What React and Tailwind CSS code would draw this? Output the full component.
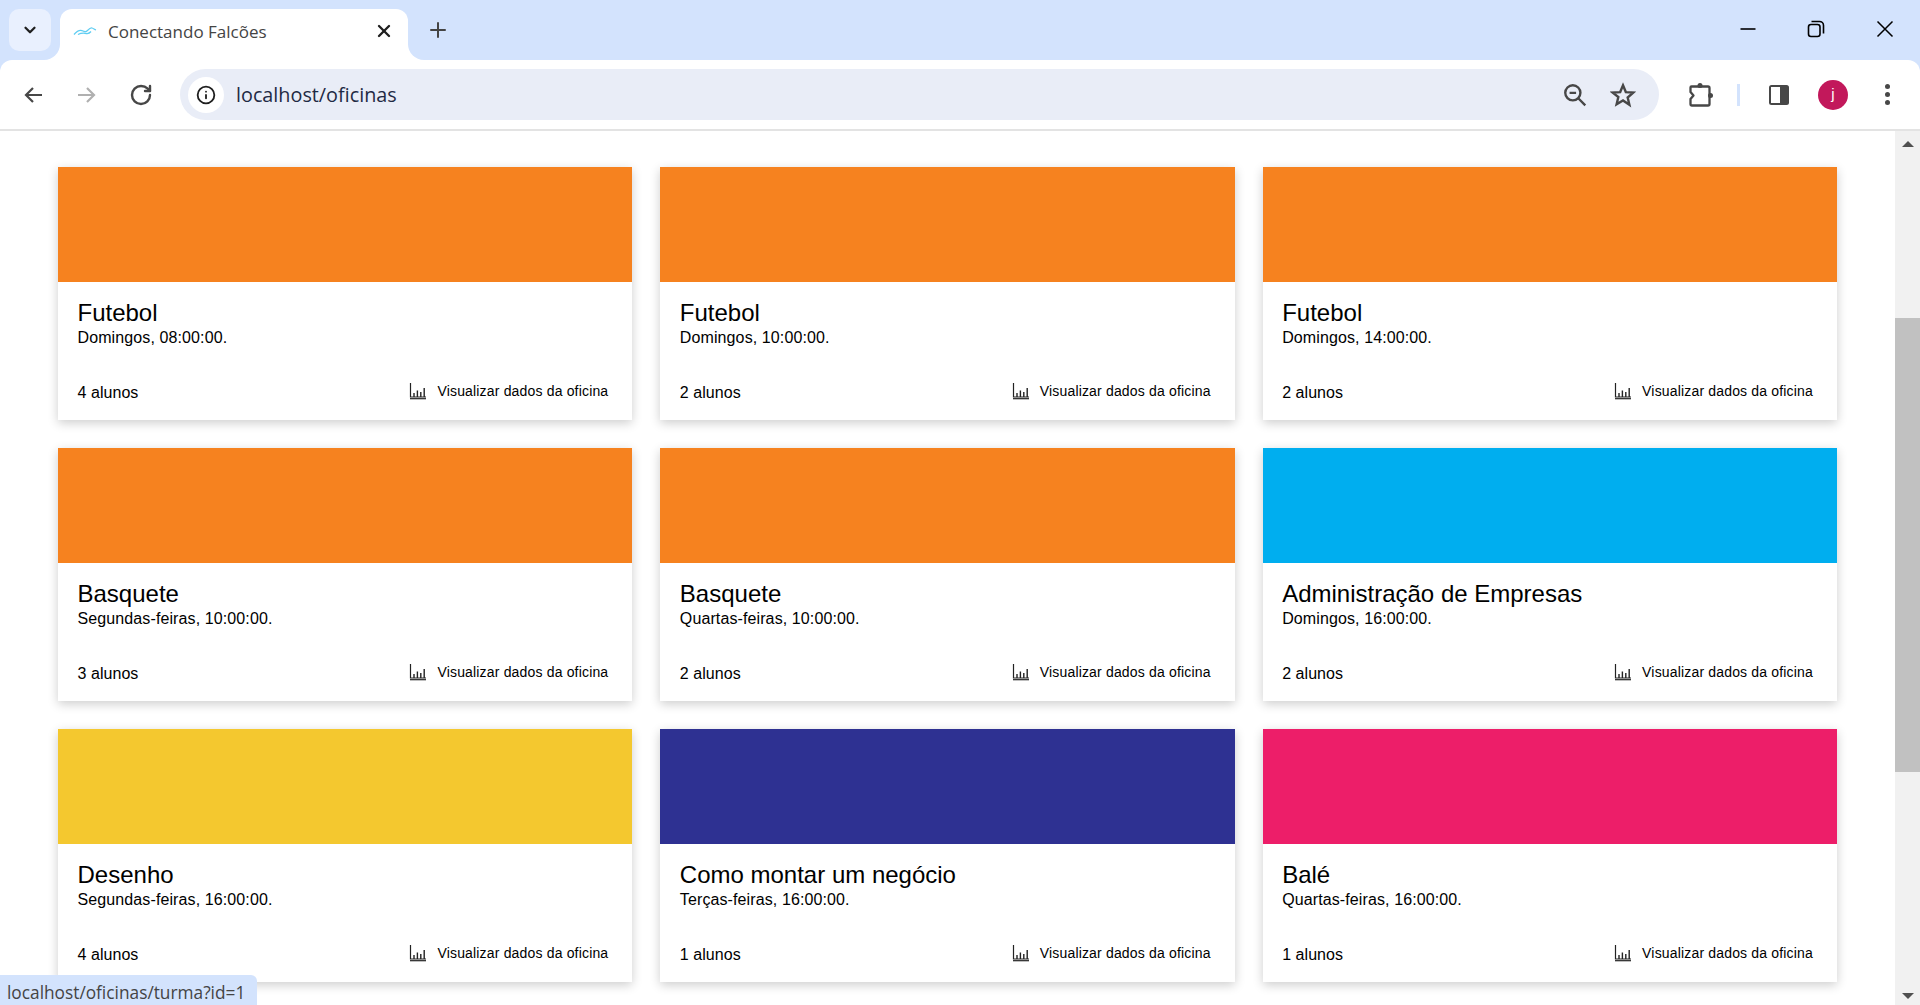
import { RotateCw, Info, X, Plus, ChevronDown } from 'lucide-react';

const oficinas = [
  { nome: 'Futebol', horario: 'Domingos, 08:00:00.', alunos: 4, cor: 'bg-[#f6821f]' },
  { nome: 'Futebol', horario: 'Domingos, 10:00:00.', alunos: 2, cor: 'bg-[#f6821f]' },
  { nome: 'Futebol', horario: 'Domingos, 14:00:00.', alunos: 2, cor: 'bg-[#f6821f]' },
  { nome: 'Basquete', horario: 'Segundas-feiras, 10:00:00.', alunos: 3, cor: 'bg-[#f6821f]' },
  { nome: 'Basquete', horario: 'Quartas-feiras, 10:00:00.', alunos: 2, cor: 'bg-[#f6821f]' },
  { nome: 'Administração de Empresas', horario: 'Domingos, 16:00:00.', alunos: 2, cor: 'bg-[#00aeef]' },
  { nome: 'Desenho', horario: 'Segundas-feiras, 16:00:00.', alunos: 4, cor: 'bg-[#f4c82f]' },
  { nome: 'Como montar um negócio', horario: 'Terças-feiras, 16:00:00.', alunos: 1, cor: 'bg-[#2e3192]' },
  { nome: 'Balé', horario: 'Quartas-feiras, 16:00:00.', alunos: 1, cor: 'bg-[#ed1e69]' },
];

const BarChartIcon = () => (
  <svg width="18" height="18" viewBox="0 0 18 18" fill="none" stroke="#222" className="shrink-0">
    <path d="M1.5 1v14h15.5" strokeWidth="1.2" />
    <path d="M1 16.7h16" strokeWidth="1.2" />
    <path d="M5 11v4M8.4 8.5v6.5M11.8 10v5M15.2 6v9" strokeWidth="1.4" />
  </svg>
);

const Card = ({ nome, horario, alunos, cor }) => (
  <div className="flex h-[253px] flex-col bg-white shadow-[0_3px_10px_rgba(0,0,0,0.2)]">
    <div className={`h-[115px] ${cor}`} />
    <div className="flex flex-1 flex-col pl-[19.5px] pr-[19px] pt-[17px] pb-[17px] text-black">
      <div className="text-[24px] leading-[28px]">{nome}</div>
      <div className="mt-[2px] text-[16px] leading-[18px] tracking-[0.11px]">{horario}</div>
      <div className="mt-auto flex items-center justify-between">
        <span className="text-[16px] leading-[20px] tracking-[0.05px]">{alunos} alunos</span>
        <a className="mr-[5px] -mt-[4px] flex items-center gap-[10px] text-[14px] leading-[20px] tracking-[0.17px]">
          <BarChartIcon />
          Visualizar dados da oficina
        </a>
      </div>
    </div>
  </div>
);

export default function App() {
  return (
    <div className="relative flex h-screen flex-col overflow-hidden bg-white font-['Liberation_Sans',Arial,sans-serif]">
      <div className="shrink-0 bg-[#d3e3fd]">
        {/* barra de abas */}
        <div className="flex h-[60px] font-['Open_Sans',sans-serif]">
          <div className="relative z-10 ml-[9px] mt-[9px] flex h-[42px] w-[42px] items-center justify-center rounded-[10px] bg-[#e9f0fe]">
            <ChevronDown size={18} strokeWidth={3} color="#1f1f1f" />
          </div>
          <div className="relative ml-[9px] mt-[9px] flex h-[51px] w-[348px] items-center rounded-t-[12px] bg-white pb-[7px] pl-[13px] pr-[14px]">
            <div className="absolute bottom-0 -left-[16px] h-[16px] w-[16px] bg-white">
              <div className="h-full w-full rounded-br-[16px] bg-[#d3e3fd]" />
            </div>
            <div className="absolute bottom-0 -right-[16px] h-[16px] w-[16px] bg-white">
              <div className="h-full w-full rounded-bl-[16px] bg-[#d3e3fd]" />
            </div>
            <svg width="24" height="10" viewBox="0 0 24 10" fill="none" stroke="#5fcdf2" strokeWidth="1.3" className="shrink-0">
              <path d="M1 8.5C4 5 7 3.5 10 5c2 1 3 1 4.5-.5 1.500-1.500 3-3 4.500-2.500 1.500.5 2.500 1.500 4 2" />
              <path d="M5 8.500c3-1.500 6-1.500 8.500-1 2 .3 3.500-.8 4.500-2" />
            </svg>
            <span className="ml-[11px] mt-[1px] flex-1 text-[17px] text-[#444]">Conectando Falcões</span>
            <X size={20} strokeWidth={2.8} color="#1f1f1f" />
          </div>
          <div className="ml-[18px] mt-[18px] h-[24px]">
            <Plus size={24} strokeWidth={2} color="#444" />
          </div>
          <div className="ml-auto mr-[24px] flex h-[58px] items-center gap-[49px]">
            <svg width="20" height="20" viewBox="0 0 20 20" fill="none" stroke="#000" strokeWidth="1.6">
              <path d="M2.500 10h15" />
            </svg>
            <svg width="18" height="18" viewBox="0 0 18 18" fill="none" stroke="#000" strokeWidth="1.6">
              <rect x="1.500" y="4.500" width="11.500" height="12" rx="2.500" />
              <path d="M4.500 1.500h8a4 4 0 0 1 4 4v8" />
            </svg>
            <svg width="22" height="22" viewBox="0 0 22 22" fill="none" stroke="#000" strokeWidth="1.5">
              <path d="M3.500 3.500l15 15M18.500 3.500l-15 15" />
            </svg>
          </div>
        </div>

        {/* barra de endereco */}
        <div className="flex h-[71px] items-center rounded-t-[12px] border-b-2 border-[#e3e3e3] bg-white">
          <div className="ml-[21px] flex items-center gap-[30px]">
            <svg width="24" height="24" viewBox="0 0 24 24" fill="none" stroke="#474747" strokeWidth="2.2">
              <path d="M21 12H5M12 5l-7 7 7 7" />
            </svg>
            <svg width="24" height="24" viewBox="0 0 24 24" fill="none" stroke="#b0b0b0" strokeWidth="2.2">
              <path d="M3 12h16M12 5l7 7-7 7" />
            </svg>
            <RotateCw size={24} strokeWidth={2.4} color="#474747" />
          </div>
          <div className="ml-[27px] flex h-[51px] w-[1479px] items-center rounded-full bg-[#e9edf7] pl-[8px] font-['Open_Sans',sans-serif]">
            <div className="flex h-[36px] w-[36px] items-center justify-center rounded-full bg-white">
              <Info size={20} strokeWidth={2.2} color="#1f1f1f" />
            </div>
            <span className="ml-[12px] text-[19.8px] text-[#1f2a44]">localhost/oficinas</span>
            <div className="ml-auto mr-[23px] flex items-center gap-[22px]">
              <svg width="26" height="26" viewBox="0 0 24 24" fill="none" stroke="#474747" strokeWidth="2.2">
                <circle cx="10" cy="10" r="7" />
                <path d="M15 15l6.500 6.500M7 10h6" />
              </svg>
              <svg width="26" height="26" viewBox="0 0 24 24" fill="none" stroke="#474747" strokeWidth="2.2">
                <path d="M12 3l2.600 6.300 6.900.5-5.200 4.500 1.600 6.700L12 17l-5.900 3.500 1.600-6.700L2.500 9.800l6.900-.5z" />
              </svg>
            </div>
          </div>
          <svg width="28" height="28" viewBox="0 0 28 28" fill="none" stroke="#474747" strokeWidth="2.3" strokeLinejoin="round" className="ml-[27px]">
            <path d="M5.500 5.500H22a1.500 1.500 0 0 1 1.500 1.500v16a1.500 1.500 0 0 1-1.500 1.500H6a1.500 1.500 0 0 1-1.500-1.500v-5l3-3.500-3-3.500V6.500a1 1 0 0 1 1-1z" />
            <circle cx="14" cy="4.500" r="2.500" fill="#474747" stroke="none" />
            <circle cx="24.500" cy="14.500" r="2.500" fill="#474747" stroke="none" />
          </svg>
          <div className="ml-[23px] h-[22px] w-[3px] bg-[#d3e3fd]" />
          <svg width="22" height="22" viewBox="0 0 22 22" className="ml-[28px]">
            <rect x="1" y="1" width="20" height="20" rx="2.500" fill="#474747" />
            <rect x="3" y="3" width="9" height="16" fill="#fff" />
          </svg>
          <div className="ml-[28px] flex h-[30px] w-[30px] items-center justify-center rounded-full bg-[#c2185b] text-[15px] text-white">j</div>
          <div className="ml-[37px] flex flex-col gap-[3px]">
            <div className="h-[5px] w-[5px] rounded-full bg-[#474747]" />
            <div className="h-[5px] w-[5px] rounded-full bg-[#474747]" />
            <div className="h-[5px] w-[5px] rounded-full bg-[#474747]" />
          </div>
        </div>
      </div>

      {/* conteudo */}
      <div className="flex min-h-0 flex-1">
        <div className="flex-1 pl-[58px] pr-[58px] pt-[36px]">
          <div className="grid grid-cols-3 gap-x-[28px] gap-y-[28px]">
            {oficinas.map((o, i) => (
              <Card key={i} {...o} />
            ))}
          </div>
        </div>
        <div className="flex w-[25px] shrink-0 flex-col bg-[#f1f1f1]">
          <div className="flex h-[26px] items-center justify-center">
            <div className="h-0 w-0 border-x-[6px] border-b-[6px] border-x-transparent border-b-[#505050]" />
          </div>
          <div className="mt-[161px] h-[454px] bg-[#c1c1c1]" />
          <div className="mt-auto flex h-[18px] items-center justify-center">
            <div className="h-0 w-0 border-x-[6px] border-t-[6px] border-x-transparent border-t-[#505050]" />
          </div>
        </div>
      </div>

      {/* link em hover */}
      <div className="absolute bottom-0 left-0 flex h-[30px] w-[257px] items-center rounded-tr-[6px] bg-[#d3e3fd] pl-[7px] pt-[6px] font-['Open_Sans',sans-serif] text-[17.3px] text-[#444]">
        localhost/oficinas/turma?id=1
      </div>
    </div>
  );
}
